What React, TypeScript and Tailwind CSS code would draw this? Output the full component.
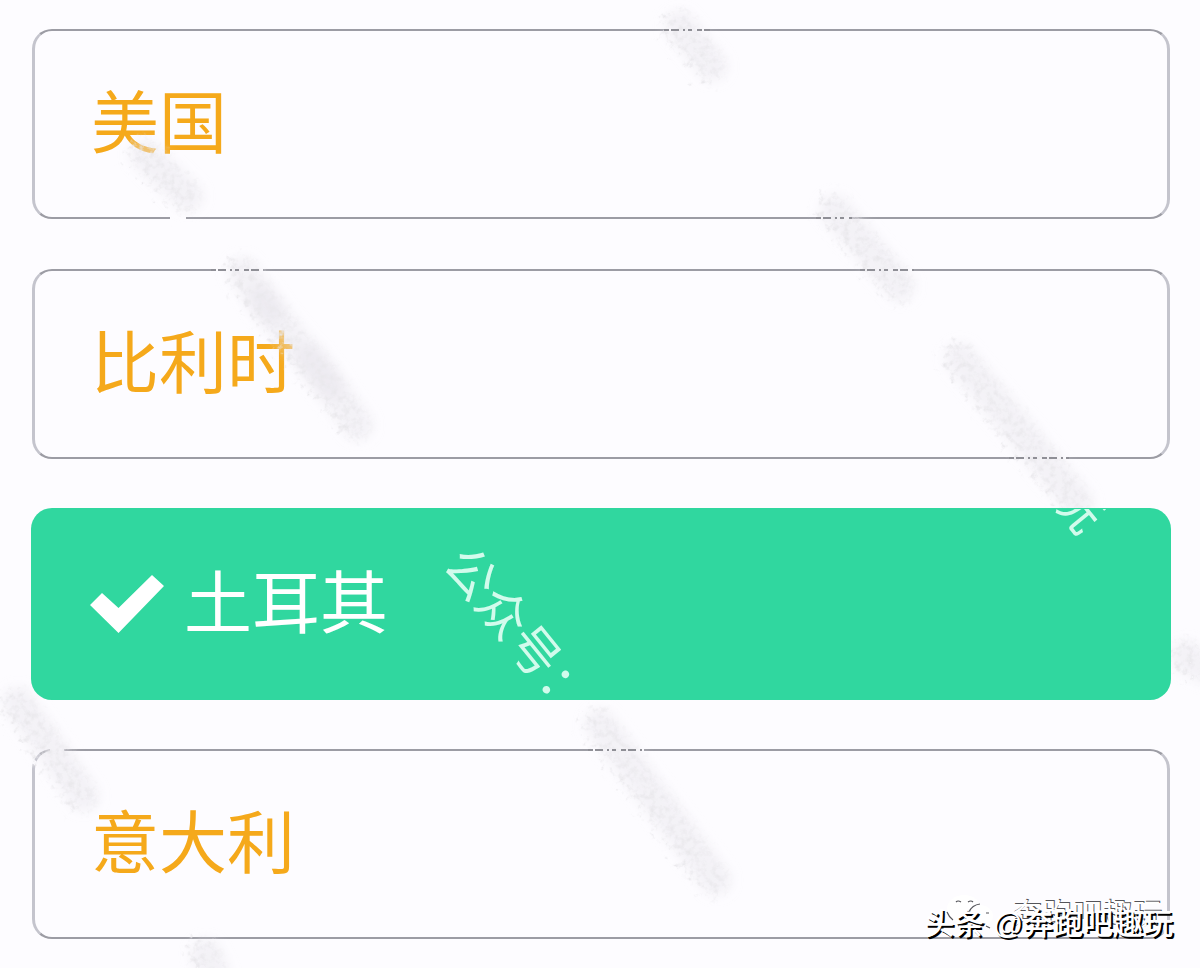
import React, { useState } from "react";

const options = ["美国", "比利时", "土耳其", "意大利"];

const stamp =
  "pointer-events-none absolute whitespace-nowrap text-[50px] leading-[50px] font-normal text-[#d2fbec] origin-top-left rotate-[51deg]";

const bands = [
  "M680 26 L712 66",
  "M145 155 L188 196",
  "M835 210 L900 286",
  "M243 272 L270 310",
  "M310 358 L358 425",
  "M262 300 L330 385",
  "M960 358 L1078 502",
  "M600 724 L716 880",
  "M18 702 L84 796",
  "M206 954 L215 975",
  "M1186 656 L1205 668",
];

const gaps = [
  "M664 30 h46",
  "M816 218 h36",
  "M860 270 h54",
  "M211 270 h52",
  "M1009 458 h60",
  "M588 750 h56",
  "M170 218 h16",
  "M50 750 h14",
  "M32 760 l4 4",
];

function Traces() {
  return (
    <svg
      className="pointer-events-none absolute top-0 left-0"
      width="1200"
      height="968"
      viewBox="0 0 1200 968"
      aria-hidden="true"
    >
      <defs>
        <filter id="haze" x="0" y="0" width="1200" height="968" filterUnits="userSpaceOnUse">
          <feGaussianBlur stdDeviation="6" />
        </filter>
        <filter id="grain" x="0" y="0" width="1200" height="968" filterUnits="userSpaceOnUse">
          <feTurbulence type="fractalNoise" baseFrequency="0.16" numOctaves="4" seed="4" result="noise" />
          <feColorMatrix
            in="noise"
            type="matrix"
            values="0 0 0 0 0.82  0 0 0 0 0.81  0 0 0 0 0.84  2.4 0 0 0 -1"
            result="tint"
          />
          <feGaussianBlur in="SourceGraphic" stdDeviation="3" result="soft" />
          <feDisplacementMap
            in="soft"
            in2="noise"
            scale="30"
            xChannelSelector="R"
            yChannelSelector="G"
            result="rough"
          />
          <feComposite in="tint" in2="rough" operator="in" />
        </filter>
      </defs>
      <g fill="none" stroke="#fdfcff" strokeWidth="4">
        {gaps.map((d) => (
          <path key={d} d={d} />
        ))}
      </g>
      <g filter="url(#haze)" fill="none" stroke="#e6e4ec" strokeOpacity="0.45" strokeWidth="30" strokeLinecap="round">
        {bands.map((d) => (
          <path key={d} d={d} />
        ))}
      </g>
      <g filter="url(#grain)" fill="none" stroke="#000" strokeWidth="32" strokeLinecap="round">
        {bands.map((d) => (
          <path key={d} d={d} />
        ))}
      </g>
      <g fill="none" stroke="#8f8f96" strokeWidth="2" strokeDasharray="5 2 8 4 2 3 4 5">
        {gaps.slice(0, 6).map((d) => (
          <path key={d} d={d} />
        ))}
      </g>
    </svg>
  );
}

function Tick() {
  return (
    <svg className="h-[60px] w-[74px] shrink-0" viewBox="0 0 74 60" fill="#fff" aria-hidden="true">
      <path d="M0 31 L12 19 L28.500 34 L62 1 L74 12 L28.500 59 Z" />
    </svg>
  );
}

function ChatBubbles() {
  return (
    <svg className="h-9 w-12" viewBox="0 0 48 36" fill="none" stroke="#55555a" strokeWidth="1.200" aria-hidden="true">
      <ellipse cx="18" cy="15" rx="17" ry="14" fill="#fff" stroke="none" />
      <ellipse cx="33" cy="22" rx="14" ry="11" fill="#fff" stroke="none" />
      <path d="M10 8 q2 -2 5 0 M22 8 q3 -2 5 0 M1 18 q2 5 6 8 M34 10 q-8 1 -11 8 M40 19 h3 M40 32 l4 2" />
    </svg>
  );
}

export default function App() {
  const [picked, setPicked] = useState("土耳其");
  return (
    <main
      lang="zh-CN"
      className="relative min-h-screen overflow-hidden bg-[#fdfcff] pt-[29px] pr-[30px] pb-[29px] pl-8 font-['Noto_Sans_CJK_SC',sans-serif]"
    >
      <div className="flex flex-col gap-[50px]">
        {options.map((name) =>
          name === picked ? (
            <button
              key={name}
              type="button"
              aria-pressed="true"
              className="relative z-10 flex h-[190px] w-full items-center gap-5 overflow-hidden rounded-[20px] bg-[#30d79f] px-[58px] text-left text-[68px] leading-[80px] text-white ring-1 ring-[#30d79f]"
            >
              <Tick />
              <span className="pb-[10px]">{name}</span>
              <span className={stamp + " top-[27px] left-[446px]"}>公众号：</span>
              <span className={stamp + " top-[-41px] left-[1053px]"}>玩</span>
            </button>
          ) : (
            <button
              key={name}
              type="button"
              aria-pressed="false"
              onClick={() => setPicked(name)}
              className="flex h-[190px] w-full items-center rounded-[20px] border-x-[3px] border-y-2 border-x-[#c4c4cd] border-y-[#9c9ca4] px-[56px] pb-[10px] text-left text-[68px] leading-[80px] text-[#f5a91b]"
            >
              {name}
            </button>
          ),
        )}
      </div>
      <Traces />
      <div className="absolute right-[38px] bottom-[38px] z-20 flex items-center gap-[18px] text-[30px] leading-9 text-white [text-shadow:1px_-1px_0_#55555a]">
        <ChatBubbles />
        <span>奔跑吧趣玩</span>
      </div>
      <p className="absolute right-[27px] bottom-[26px] z-20 font-['Liberation_Sans','Noto_Sans_CJK_SC',sans-serif] text-[30px] leading-9 font-medium text-white [text-shadow:2px_2px_0_#000]">
        头条 @奔跑吧趣玩
      </p>
    </main>
  );
}
